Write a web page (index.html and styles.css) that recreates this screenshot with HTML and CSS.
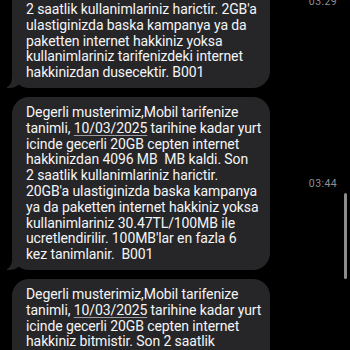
FILE: index.html
```html
<!DOCTYPE html>
<html lang="tr">
<head>
    <meta charset="UTF-8">
    <meta name="viewport" content="width=device-width, initial-scale=1.0">
    <title>Mesajlar</title>
    <link rel="stylesheet" href="styles.css">
</head>
<body>
    <div class="thread">
        <div class="row">
            <div class="bubble">
                Degerli musterimiz,Mobil tarifenize<br>
                tanimli, <span class="date">10/03/2025</span> tarihine kadar yurt<br>
                icinde gecerli 2GB cepten internet<br>
                hakkinizdan 1024 MB&nbsp; MB kaldi.<br>
                Son<br>
                2 saatlik kullanimlariniz harictir. 2GB'a<br>
                ulastiginizda baska kampanya ya da<br>
                paketten internet hakkiniz yoksa<br>
                kullanimlariniz tarifenizdeki internet<br>
                hakkinizdan dusecektir. B001
            </div>
            <div class="time">03:29</div>
        </div>

        <div class="row">
            <div class="bubble">
                Degerli musterimiz,Mobil tarifenize<br>
                tanimli, <span class="date">10/03/2025</span> tarihine kadar yurt<br>
                icinde gecerli 20GB cepten internet<br>
                hakkinizdan 4096 MB&nbsp; MB kaldi. Son<br>
                2 saatlik kullanimlariniz harictir.<br>
                20GB'a ulastiginizda baska kampanya<br>
                ya da paketten internet hakkiniz yoksa<br>
                kullanimlariniz 30.47TL/100MB ile<br>
                ucretlendirilir. 100MB'lar en fazla 6<br>
                kez tanimlanir.&nbsp; B001
            </div>
            <div class="time">03:44</div>
        </div>

        <div class="row">
            <div class="bubble">
                Degerli musterimiz,Mobil tarifenize<br>
                tanimli, <span class="date">10/03/2025</span> tarihine kadar yurt<br>
                icinde gecerli 20GB cepten internet<br>
                hakkiniz bitmistir. Son 2 saatlik<br>
                kullanimlariniz harictir. 20GB'a<br>
                ulastiginizda baska kampanya ya da<br>
                paketten internet hakkiniz yoksa<br>
                kullanimlariniz 30.47TL/100MB ile<br>
                ucretlendirilir.&nbsp; B001
            </div>
            <div class="time">04:12</div>
        </div>
    </div>

    <div class="scrollbar"></div>
</body>
</html>
```

FILE: styles.css
```css
body {
    margin: 0;
    background-color: #000000;
    font-family: Roboto, "Liberation Sans", sans-serif;
    overflow: hidden;
    height: 350px;
}

.thread {
    display: flex;
    flex-direction: column;
    gap: 9px;
    margin-top: -85px;
}

.row {
    display: flex;
    align-items: center;
}

.bubble {
    position: relative;
    flex: none;
    width: 258px;
    box-sizing: border-box;
    margin-left: 12px;
    padding: 8px 0 7px 14px;
    background-color: #262628;
    border-radius: 17px;
    color: #f5f5f7;
    font-size: 14px;
    letter-spacing: -0.1px;
    line-height: 15.8px;
    white-space: nowrap;
}

/* little tail at bottom-left */
.bubble::before {
    content: "";
    position: absolute;
    left: -5px;
    bottom: 0;
    width: 16px;
    height: 14px;
    background-color: #262628;
    border-bottom-right-radius: 14px 12px;
}

.bubble::after {
    content: "";
    position: absolute;
    left: -9px;
    bottom: 0;
    width: 9px;
    height: 14px;
    background-color: #000000;
    border-bottom-right-radius: 8px 10px;
}

.date {
    text-decoration: underline;
    text-decoration-color: #9a9a9e;
    text-underline-offset: 2px;
}

.time {
    flex: 1;
    text-align: right;
    padding-right: 13px;
    color: #8e8e93;
    font-size: 10.5px;
    letter-spacing: 0.4px;
}

.scrollbar {
    position: absolute;
    left: 344px;
    top: 193px;
    width: 3px;
    height: 86px;
    border-radius: 2px;
    background-color: #8c8c8f;
}
```
